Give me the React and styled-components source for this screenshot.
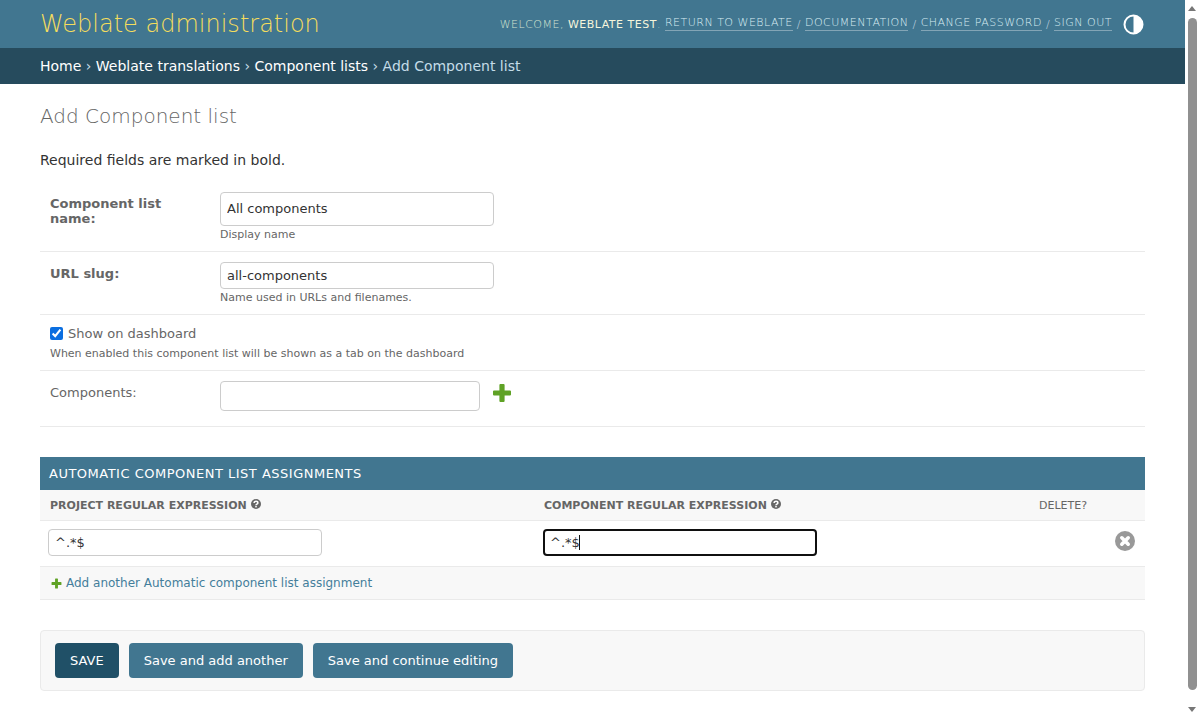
import styled, { createGlobalStyle } from "styled-components";
import { useEffect, useRef } from "react";

const GlobalStyle = createGlobalStyle`
  body {
    margin: 0;
    background: #fff;
    color: #333;
    font-family: "DejaVu Sans", "Liberation Sans", sans-serif;
    font-size: 13px;
  }
`;

const Page = styled.div`
  margin-right: 15px;
`;

// headless browser hides the native one, so it is painted over the page edge
const ScrollTrack = styled.div`
  position: fixed;
  top: 0;
  right: 0;
  bottom: 0;
  width: 15px;
  background: #fff;
`;

const ScrollThumb = styled.div`
  position: absolute;
  top: 18px;
  left: 3px;
  width: 9px;
  height: 672px;
  border-radius: 5px;
  background: #909090;
`;

const ScrollArrow = styled.div`
  position: absolute;
  left: 3px;
  ${(p) => (p.$down ? "bottom: 7px;" : "top: 6px;")}
  width: 0;
  height: 0;
  border-left: 4.5px solid transparent;
  border-right: 4.5px solid transparent;
  ${(p) => (p.$down ? "border-top" : "border-bottom")}: 5px solid #777;
`;

const Header = styled.header`
  height: 48px;
  background: #417690;
  display: flex;
  align-items: center;
  justify-content: space-between;
  padding: 0 40px;
`;

const Branding = styled.h1`
  margin: 0;
  font-size: 24px;
  font-weight: 200;
  font-family: "DejaVu Sans Light", "DejaVu Sans", sans-serif;
  color: #f5dd5d;
`;

const UserTools = styled.div`
  display: flex;
  align-items: center;
  font-size: 11px;
  letter-spacing: 0.5px;
  text-transform: uppercase;
  color: #d3e3d0;
  font-weight: 300;
  white-space: pre;
`;

const Strong = styled.strong`
  color: #f5f5dc;
  font-weight: 400;
`;

const ToolLink = styled.a`
  color: #d9edf3;
  border-bottom: 1px solid rgba(255, 255, 255, 0.35);
  padding-bottom: 1px;
  margin-top: -1px;
`;

const Sep = styled.span`
  color: #c5d8e0;
  margin: 0 4px;
`;

const ThemeIcon = styled.svg`
  width: 21px;
  height: 21px;
  margin-left: 10.5px;
  margin-right: 1.5px;
`;

const Breadcrumbs = styled.nav`
  height: 36px;
  background: #264b5d;
  display: flex;
  align-items: center;
  padding: 0 40px;
  font-size: 14px;
  color: #c4dce8;
  white-space: pre;
`;

const Crumb = styled.a`
  color: #fff;
`;

const Content = styled.main`
  padding: 20px 40px 28px;
`;

const Title = styled.h2`
  margin: 0;
  font-size: 20px;
  line-height: 24px;
  font-weight: 200;
  font-family: "DejaVu Sans Light", "DejaVu Sans", sans-serif;
  color: #666;
`;

const Note = styled.p`
  margin: 24px 0 0;
  height: 30px;
  font-size: 14px;
  line-height: 17px;
  color: #333;
`;

const Row = styled.div`
  display: flex;
  box-sizing: border-box;
  height: ${(p) => p.$height}px;
  padding: ${(p) => p.$top}px 10px 0;
  border-bottom: 1px solid #eaeaea;
`;

const Label = styled.label`
  width: 170px;
  flex: none;
  font-size: 13px;
  line-height: 15px;
  color: #666;
  font-weight: ${(p) => (p.$required ? 700 : 400)};
  padding-top: 4px;
`;

const TextInput = styled.input`
  display: block;
  box-sizing: border-box;
  width: ${(p) => p.$width}px;
  height: ${(p) => p.$height}px;
  padding: ${(p) => (p.$raised ? "3px 6px 5px" : "5px 6px")};
  border: 1px solid #ccc;
  border-radius: 4px;
  background: #fff;
  color: #333;
  font-family: inherit;
  font-size: 13px;

  &:focus {
    outline: none;
    border: 2px solid #101010;
    padding: 4px 5px;
  }
`;

const Help = styled.div`
  margin-top: 2px;
  font-size: 11px;
  line-height: 14px;
  color: #666;
`;

const CheckLine = styled.div`
  display: flex;
  align-items: center;
  height: 18px;
  margin-bottom: 5px;
  font-size: 13px;
  color: #666;
`;

const Check = styled.input`
  margin: 0 5px 0 0;
  width: 13px;
  height: 13px;
  accent-color: #0b6ee0;
`;

const FieldPair = styled.div`
  display: flex;
  align-items: center;
  align-self: flex-start;
  gap: 12px;
`;

const AddRelated = styled.span`
  display: flex;
  margin-bottom: 6px;
`;

const Group = styled.section`
  margin-top: 30px;
`;

const GroupHeading = styled.h2`
  margin: 0;
  height: 33px;
  display: flex;
  align-items: center;
  padding: 0 9px;
  background: #417690;
  color: #fff;
  font-size: 13px;
  font-weight: 400;
  letter-spacing: 0.5px;
  text-transform: uppercase;
`;

const HeadRow = styled.div`
  display: grid;
  grid-template-columns: 494px 495px 1fr;
  height: 31px;
  background: #f8f8f8;
  border-bottom: 1px solid #eaeaea;
  box-sizing: border-box;
  align-items: center;
  padding-left: 10px;
  font-size: 11px;
  color: #666;
  text-transform: uppercase;
`;

const HeadCell = styled.div`
  display: flex;
  align-items: center;
  gap: 4px;
  font-weight: ${(p) => (p.$plain ? 400 : 700)};
`;

const HelpIcon = styled.svg`
  width: 10px;
  height: 10px;
  margin-top: -2px;
`;

const BodyRow = styled.div`
  display: grid;
  grid-template-columns: 495px 1fr 30px;
  height: 46px;
  box-sizing: border-box;
  border-bottom: 1px solid #eaeaea;
  padding: 0 0 2px 8px;
  align-items: center;
`;

const CaretField = styled.div`
  position: relative;
`;

const Caret = styled.span`
  position: absolute;
  left: 36px;
  top: 6px;
  width: 1px;
  height: 15px;
  background: #111;
`;

const DeleteIcon = styled.svg`
  width: 20px;
  height: 20px;
  margin-bottom: 4px;
`;

const AddRow = styled.div`
  height: 33px;
  box-sizing: border-box;
  display: flex;
  align-items: center;
  gap: 4px;
  padding-left: 11px;
  background: #f8f8f8;
  border-bottom: 1px solid #eaeaea;
  font-size: 12px;
`;

const AddLink = styled.a`
  color: #447e9b;
`;

const Submit = styled.div`
  margin-top: 30px;
  height: 61px;
  box-sizing: border-box;
  display: flex;
  align-items: center;
  gap: 10px;
  padding: 0 14px;
  background: #f8f8f8;
  border: 1px solid #eaeaea;
  border-radius: 4px;
`;

const Button = styled.button`
  height: 35px;
  padding: 0 15px;
  border: none;
  border-radius: 4px;
  background: ${(p) => (p.$default ? "#205067" : "#417690")};
  color: #fff;
  font-family: inherit;
  font-size: 13px;
  text-transform: ${(p) => (p.$default ? "uppercase" : "none")};
`;

const PlusIcon = ({ size }) => (
  <svg width={size} height={size} viewBox="0 0 20 20">
    <path fill="#5fa225" d="M7.4 2a1 1 0 0 1 1-1h3.2a1 1 0 0 1 1 1v5.4H18a1 1 0 0 1 1 1v3.2a1 1 0 0 1-1 1h-5.4V18a1 1 0 0 1-1 1H8.4a1 1 0 0 1-1-1v-5.4H2a1 1 0 0 1-1-1V8.4a1 1 0 0 1 1-1h5.4z" />
  </svg>
);

const QuestionIcon = () => (
  <HelpIcon viewBox="0 0 16 16">
    <circle cx="8" cy="8" r="8" fill="#666" />
    <path fill="none" stroke="#fff" strokeWidth="2.4" d="M5 6.2c0-3.4 6-3.4 6 0 0 2-3 2-3 3.8" />
    <rect x="6.8" y="11" width="2.4" height="2.4" fill="#fff" />
  </HelpIcon>
);

const App = () => {
  const focusRef = useRef(null);

  useEffect(() => {
    const el = focusRef.current;
    el.focus();
    el.setSelectionRange(el.value.length, el.value.length);
  }, []);

  return (
    <Page>
      <GlobalStyle />
      <Header>
        <Branding>Weblate administration</Branding>
        <UserTools>
          Welcome, <Strong>Weblate Test</Strong>.{" "}
          <ToolLink>Return to Weblate</ToolLink>
          <Sep>/</Sep>
          <ToolLink>Documentation</ToolLink>
          <Sep>/</Sep>
          <ToolLink>Change password</ToolLink>
          <Sep>/</Sep>
          <ToolLink>Sign out</ToolLink>
          <ThemeIcon viewBox="0 0 21 21">
            <circle cx="10.5" cy="10.5" r="9" fill="none" stroke="#fff" strokeWidth="2" />
            <path fill="#fff" d="M10.5 1.5a9 9 0 0 1 0 18z" />
          </ThemeIcon>
        </UserTools>
      </Header>
      <Breadcrumbs>
        <Crumb>Home</Crumb> › <Crumb>Weblate translations</Crumb> ›{" "}
        <Crumb>Component lists</Crumb> › Add Component list
      </Breadcrumbs>
      <Content>
        <Title>Add Component list</Title>
        <Note>Required fields are marked in bold.</Note>

        <Row $height={70} $top={10}>
          <Label $required>
            Component list
            <br />
            name:
          </Label>
          <div>
            <TextInput $width={274} $height={34} $raised defaultValue="All components" />
            <Help>Display name</Help>
          </div>
        </Row>
        <Row $height={63} $top={10}>
          <Label $required>URL slug:</Label>
          <div>
            <TextInput $width={274} $height={27} defaultValue="all-components" />
            <Help>Name used in URLs and filenames.</Help>
          </div>
        </Row>
        <Row $height={56} $top={9}>
          <div>
            <CheckLine>
              <Check type="checkbox" defaultChecked />
              Show on dashboard
            </CheckLine>
            <Help>When enabled this component list will be shown as a tab on the dashboard</Help>
          </div>
        </Row>
        <Row $height={56} $top={10}>
          <Label>Components:</Label>
          <FieldPair>
            <TextInput $width={260} $height={30} />
            <AddRelated>
              <PlusIcon size={20} />
            </AddRelated>
          </FieldPair>
        </Row>

        <Group>
          <GroupHeading>Automatic component list assignments</GroupHeading>
          <HeadRow>
            <HeadCell>
              Project regular expression <QuestionIcon />
            </HeadCell>
            <HeadCell>
              Component regular expression <QuestionIcon />
            </HeadCell>
            <HeadCell $plain>Delete?</HeadCell>
          </HeadRow>
          <BodyRow>
            <TextInput $width={274} $height={27} defaultValue="^.*$" />
            <CaretField>
              <TextInput ref={focusRef} $width={274} $height={27} defaultValue="^.*$" />
              <Caret />
            </CaretField>
            <DeleteIcon viewBox="0 0 20 20">
              <circle cx="10" cy="10" r="10" fill="#999" />
              <path stroke="#fff" strokeWidth="3.6" strokeLinecap="round" d="M6.8 6.8l6.4 6.4M13.2 6.8l-6.4 6.4" />
            </DeleteIcon>
          </BodyRow>
          <AddRow>
            <PlusIcon size={11} />
            <AddLink>Add another Automatic component list assignment</AddLink>
          </AddRow>
        </Group>

        <Submit>
          <Button $default>Save</Button>
          <Button>Save and add another</Button>
          <Button>Save and continue editing</Button>
        </Submit>
      </Content>
      <ScrollTrack>
        <ScrollArrow />
        <ScrollThumb />
        <ScrollArrow $down />
      </ScrollTrack>
    </Page>
  );
};

export default App;
